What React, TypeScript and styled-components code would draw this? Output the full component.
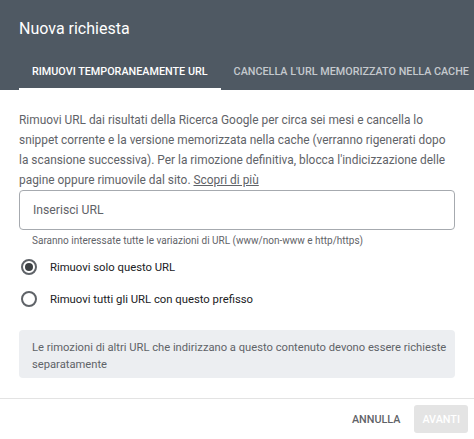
import React from 'react';
import styled, { createGlobalStyle } from 'styled-components';

const GlobalStyle = createGlobalStyle`
  html, body {
    margin: 0;
    padding: 0;
    background: #ffffff;
  }
  body {
    font-family: Roboto, "Liberation Sans", Arial, sans-serif;
    -webkit-font-smoothing: antialiased;
  }
`;

type Option = {
  label: string,
  checked: boolean,
};

const options: Option[] = [
  {label: 'Rimuovi solo questo URL', checked: true},
  {label: 'Rimuovi tutti gli URL con questo prefisso', checked: false},
];

const App = () => {
  return (
    <>
      <GlobalStyle />
      <Dialog>
        <Header>
          <Title>Nuova richiesta</Title>
          <Tabs>
            <Tab active>Rimuovi temporaneamente URL</Tab>
            <Tab>Cancella l'URL memorizzato nella cache</Tab>
          </Tabs>
        </Header>
        <Body>
          <Description>
            Rimuovi URL dai risultati della Ricerca Google per circa sei mesi e cancella lo<br />
            snippet corrente e la versione memorizzata nella cache (verranno rigenerati dopo<br />
            la scansione successiva). Per la rimozione definitiva, blocca l'indicizzazione delle<br />
            pagine oppure rimuovile dal sito. <LearnMore href="#">Scopri di più</LearnMore>
          </Description>
          <UrlInput placeholder="Inserisci URL" />
          <Hint>Saranno interessate tutte le variazioni di URL (www/non-www e http/https)</Hint>
          <RadioGroup>
            {options.map(option => (
              <RadioRow key={option.label}>
                <Radio checked={option.checked} />
                <RadioLabel>{option.label}</RadioLabel>
              </RadioRow>
            ))}
          </RadioGroup>
          <Notice>
            Le rimozioni di altri URL che indirizzano a questo contenuto devono essere richieste<br />
            separatamente
          </Notice>
        </Body>
        <Footer>
          <TextButton>Annulla</TextButton>
          <PrimaryButton disabled>Avanti</PrimaryButton>
        </Footer>
      </Dialog>
    </>
  );
};

export default App;

const Dialog = styled.div`
  width: 474px;
  height: 439px;
  display: flex;
  flex-direction: column;
  overflow: hidden;
  background: #ffffff;
`;

const Header = styled.div`
  background: #4f5963;
  padding: 17px 0 0 19px;
`;

const Title = styled.h1`
  margin: 0;
  font-size: 16px;
  line-height: 24px;
  font-weight: 400;
  color: #ffffff;
`;

const Tabs = styled.div`
  display: flex;
  margin-top: 13px;
  white-space: nowrap;
`;

const Tab = styled.div<{active?: boolean}>`
  height: 34px;
  padding: 0 13px;
  line-height: 36px;
  font-size: 10.8px;
  font-weight: 500;
  text-transform: uppercase;
  color: ${({active}) => active ? '#ffffff' : '#c5c9ce'};
  border-bottom: 2px solid ${({active}) => active ? '#ffffff' : 'transparent'};
`;

const Body = styled.div`
  padding: 20px 19px 0;
`;

const Description = styled.p`
  margin: 0;
  font-size: 11.9px;
  line-height: 20px;
  color: #5f6368;
  white-space: nowrap;
`;

const LearnMore = styled.a`
  color: #5f6368;
  text-decoration: underline;
`;

const UrlInput = styled.input`
  box-sizing: border-box;
  display: block;
  width: 100%;
  height: 40px;
  margin-top: 0;
  padding: 0 13px;
  border: 1px solid #a6aaaf;
  border-radius: 4px;
  font-family: Roboto, "Liberation Sans", Arial, sans-serif;
  font-size: 12.2px;
  color: #202124;
  outline: none;

  &::placeholder {
    color: #5f6368;
  }
`;

const Hint = styled.div`
  margin-top: 3px;
  padding-left: 13px;
  font-size: 10px;
  line-height: 16px;
  color: #5f6368;
`;

const RadioGroup = styled.div`
  display: flex;
  flex-direction: column;
  margin-top: 2px;
`;

const RadioRow = styled.label`
  display: flex;
  align-items: center;
  gap: 13px;
  height: 32px;
`;

const Radio = styled.span<{checked: boolean}>`
  box-sizing: border-box;
  width: 16px;
  height: 16px;
  margin-left: 2px;
  border-radius: 50%;
  border: 2px solid #5f6368;
  display: flex;
  align-items: center;
  justify-content: center;

  &::after {
    content: '';
    width: 8px;
    height: 8px;
    border-radius: 50%;
    background: ${({checked}) => checked ? '#3c4043' : 'transparent'};
  }
`;

const RadioLabel = styled.span`
  font-size: 11.3px;
  color: #202124;
`;

const Notice = styled.div`
  margin-top: 15px;
  padding: 9px 13px 5px;
  background: #eceef1;
  border-radius: 4px;
  font-size: 11.2px;
  line-height: 17px;
  color: #5f6368;
  white-space: nowrap;
`;

const Footer = styled.div`
  margin-top: auto;
  display: flex;
  justify-content: flex-end;
  align-items: center;
  gap: 6px;
  height: 40px;
  padding: 0 6px 0 0;
  border-top: 1px solid #e3e3e3;
`;

const ButtonBase = styled.button`
  font-family: Roboto, "Liberation Sans", Arial, sans-serif;
  font-size: 10.8px;
  font-weight: 500;
  text-transform: uppercase;
  border: none;
  border-radius: 3px;
  height: 28px;
`;

const TextButton = styled(ButtonBase)`
  background: transparent;
  color: #5f6368;
  padding: 0 8px;
`;

const PrimaryButton = styled(ButtonBase)`
  background: #e4e4e4;
  color: #ffffff;
  padding: 0 8px;
`;
